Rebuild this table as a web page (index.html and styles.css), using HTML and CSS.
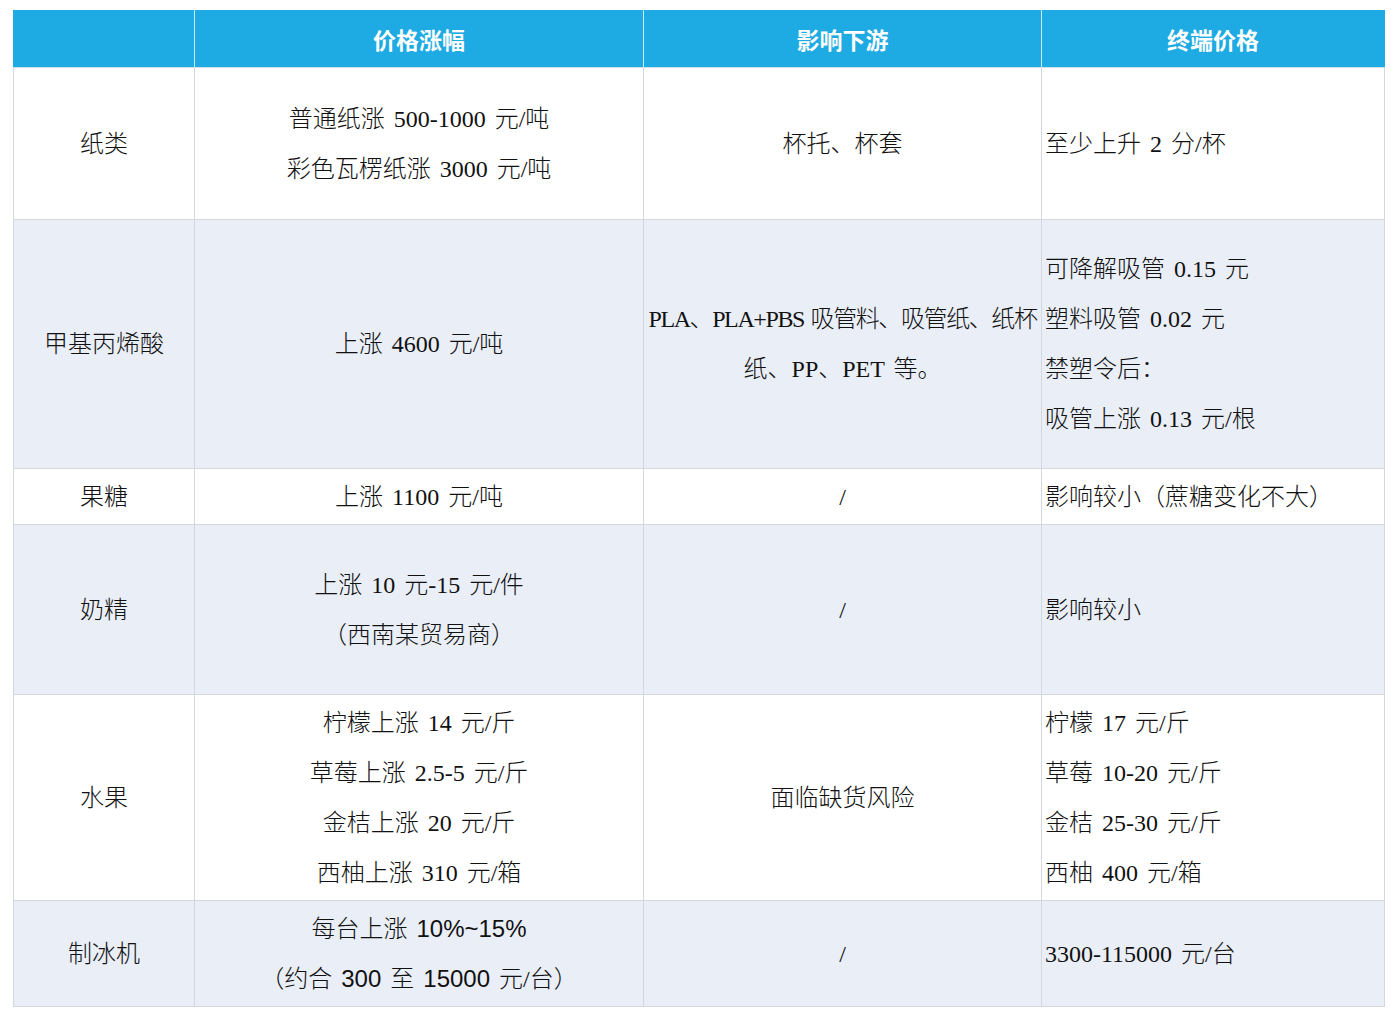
FILE: index.html
```html
<!DOCTYPE html>
<html lang="zh-CN">
<head>
<meta charset="utf-8">
<title>原料价格涨幅</title>
<link rel="stylesheet" href="styles.css">
</head>
<body>
<table class="price-table">
  <colgroup>
    <col class="c1"><col class="c2"><col class="c3"><col class="c4">
  </colgroup>
  <thead>
    <tr class="head-row">
      <th></th>
      <th>价格涨幅</th>
      <th>影响下游</th>
      <th>终端价格</th>
    </tr>
  </thead>
  <tbody>
    <tr class="row r-paper">
      <td class="name">纸类</td>
      <td class="mid">普通纸涨 500-1000 元/吨<br>彩色瓦楞纸涨 3000 元/吨</td>
      <td class="mid">杯托、杯套</td>
      <td class="left">至少上升 2 分/杯</td>
    </tr>
    <tr class="row alt r-acid">
      <td class="name">甲基丙烯酸</td>
      <td class="mid">上涨 4600 元/吨</td>
      <td class="mid nowrap"><span class="tight">PLA、PLA+PBS 吸管料、吸管纸、纸杯</span><br>纸、PP、PET 等。</td>
      <td class="left">可降解吸管 0.15 元<br>塑料吸管 0.02 元<br>禁塑令后：<br>吸管上涨 0.13 元/根</td>
    </tr>
    <tr class="row r-sugar">
      <td class="name">果糖</td>
      <td class="mid">上涨 1100 元/吨</td>
      <td class="mid">/</td>
      <td class="left">影响较小（蔗糖变化不大）</td>
    </tr>
    <tr class="row alt r-cream">
      <td class="name">奶精</td>
      <td class="mid">上涨 10 元-15 元/件<br>（西南某贸易商）</td>
      <td class="mid">/</td>
      <td class="left">影响较小</td>
    </tr>
    <tr class="row r-fruit">
      <td class="name">水果</td>
      <td class="mid">柠檬上涨 14 元/斤<br>草莓上涨 2.5-5 元/斤<br>金桔上涨 20 元/斤<br>西柚上涨 310 元/箱</td>
      <td class="mid">面临缺货风险</td>
      <td class="left">柠檬 17 元/斤<br>草莓 10-20 元/斤<br>金桔 25-30 元/斤<br>西柚 400 元/箱</td>
    </tr>
    <tr class="row alt r-ice">
      <td class="name">制冰机</td>
      <td class="mid">每台上涨 <span class="sans">10%~15%</span><br>（约合 <span class="sans">300</span> 至 <span class="sans">15000</span> 元/台）</td>
      <td class="mid">/</td>
      <td class="left">3300-115000 元/台</td>
    </tr>
  </tbody>
</table>
</body>
</html>
```

FILE: styles.css
```css
html, body {
  margin: 0;
  padding: 0;
  background: #ffffff;
}

body {
  padding: 10px 0 0 13px;
  font-family: "Liberation Serif", "Noto Sans CJK SC", serif;
  color: #111111;
}

.price-table {
  border-collapse: collapse;
  table-layout: fixed;
  width: 1371px;
  font-size: 24px;
  line-height: 50px;
}

.c1 { width: 181px; }
.c2 { width: 449px; }
.c3 { width: 398px; }
.c4 { width: 343px; }

.head-row th {
  height: 56px;
  padding: 0;
  background: #1eaae2;
  color: #ffffff;
  font-family: "Noto Sans CJK SC", sans-serif;
  font-weight: 700;
  font-size: 23px;
  line-height: 30px;
  text-align: center;
  vertical-align: middle;
  border-left: 1px solid #cde9f6;
  border-right: 1px solid #cde9f6;
  border-top: 1px solid #1eaae2;
  border-bottom: 1px solid #d6dce5;
}

.head-row th:first-child { border-left-color: #1eaae2; }
.head-row th:last-child { border-right-color: #1eaae2; }

.row td {
  padding: 0 4px;
  border: 1px solid #d3d8df;
  vertical-align: middle;
  font-weight: 300;
  word-spacing: 3px;
  background: #ffffff;
}

.row.alt td { background: #e9eef7; }

.name, .mid { text-align: center; }
.left { text-align: left; padding-left: 3px !important; }
.nowrap { white-space: nowrap; }
.tight { letter-spacing: -1.4px; word-spacing: 2px; }

.sans { font-family: "Liberation Sans", "Noto Sans CJK SC", sans-serif; }

.r-paper td { height: 151px; }
.r-acid td { height: 248px; }
.r-sugar td { height: 55px; }
.r-cream td { height: 169px; }
.r-fruit td { height: 205px; }
.r-ice td { height: 105px; }
```
